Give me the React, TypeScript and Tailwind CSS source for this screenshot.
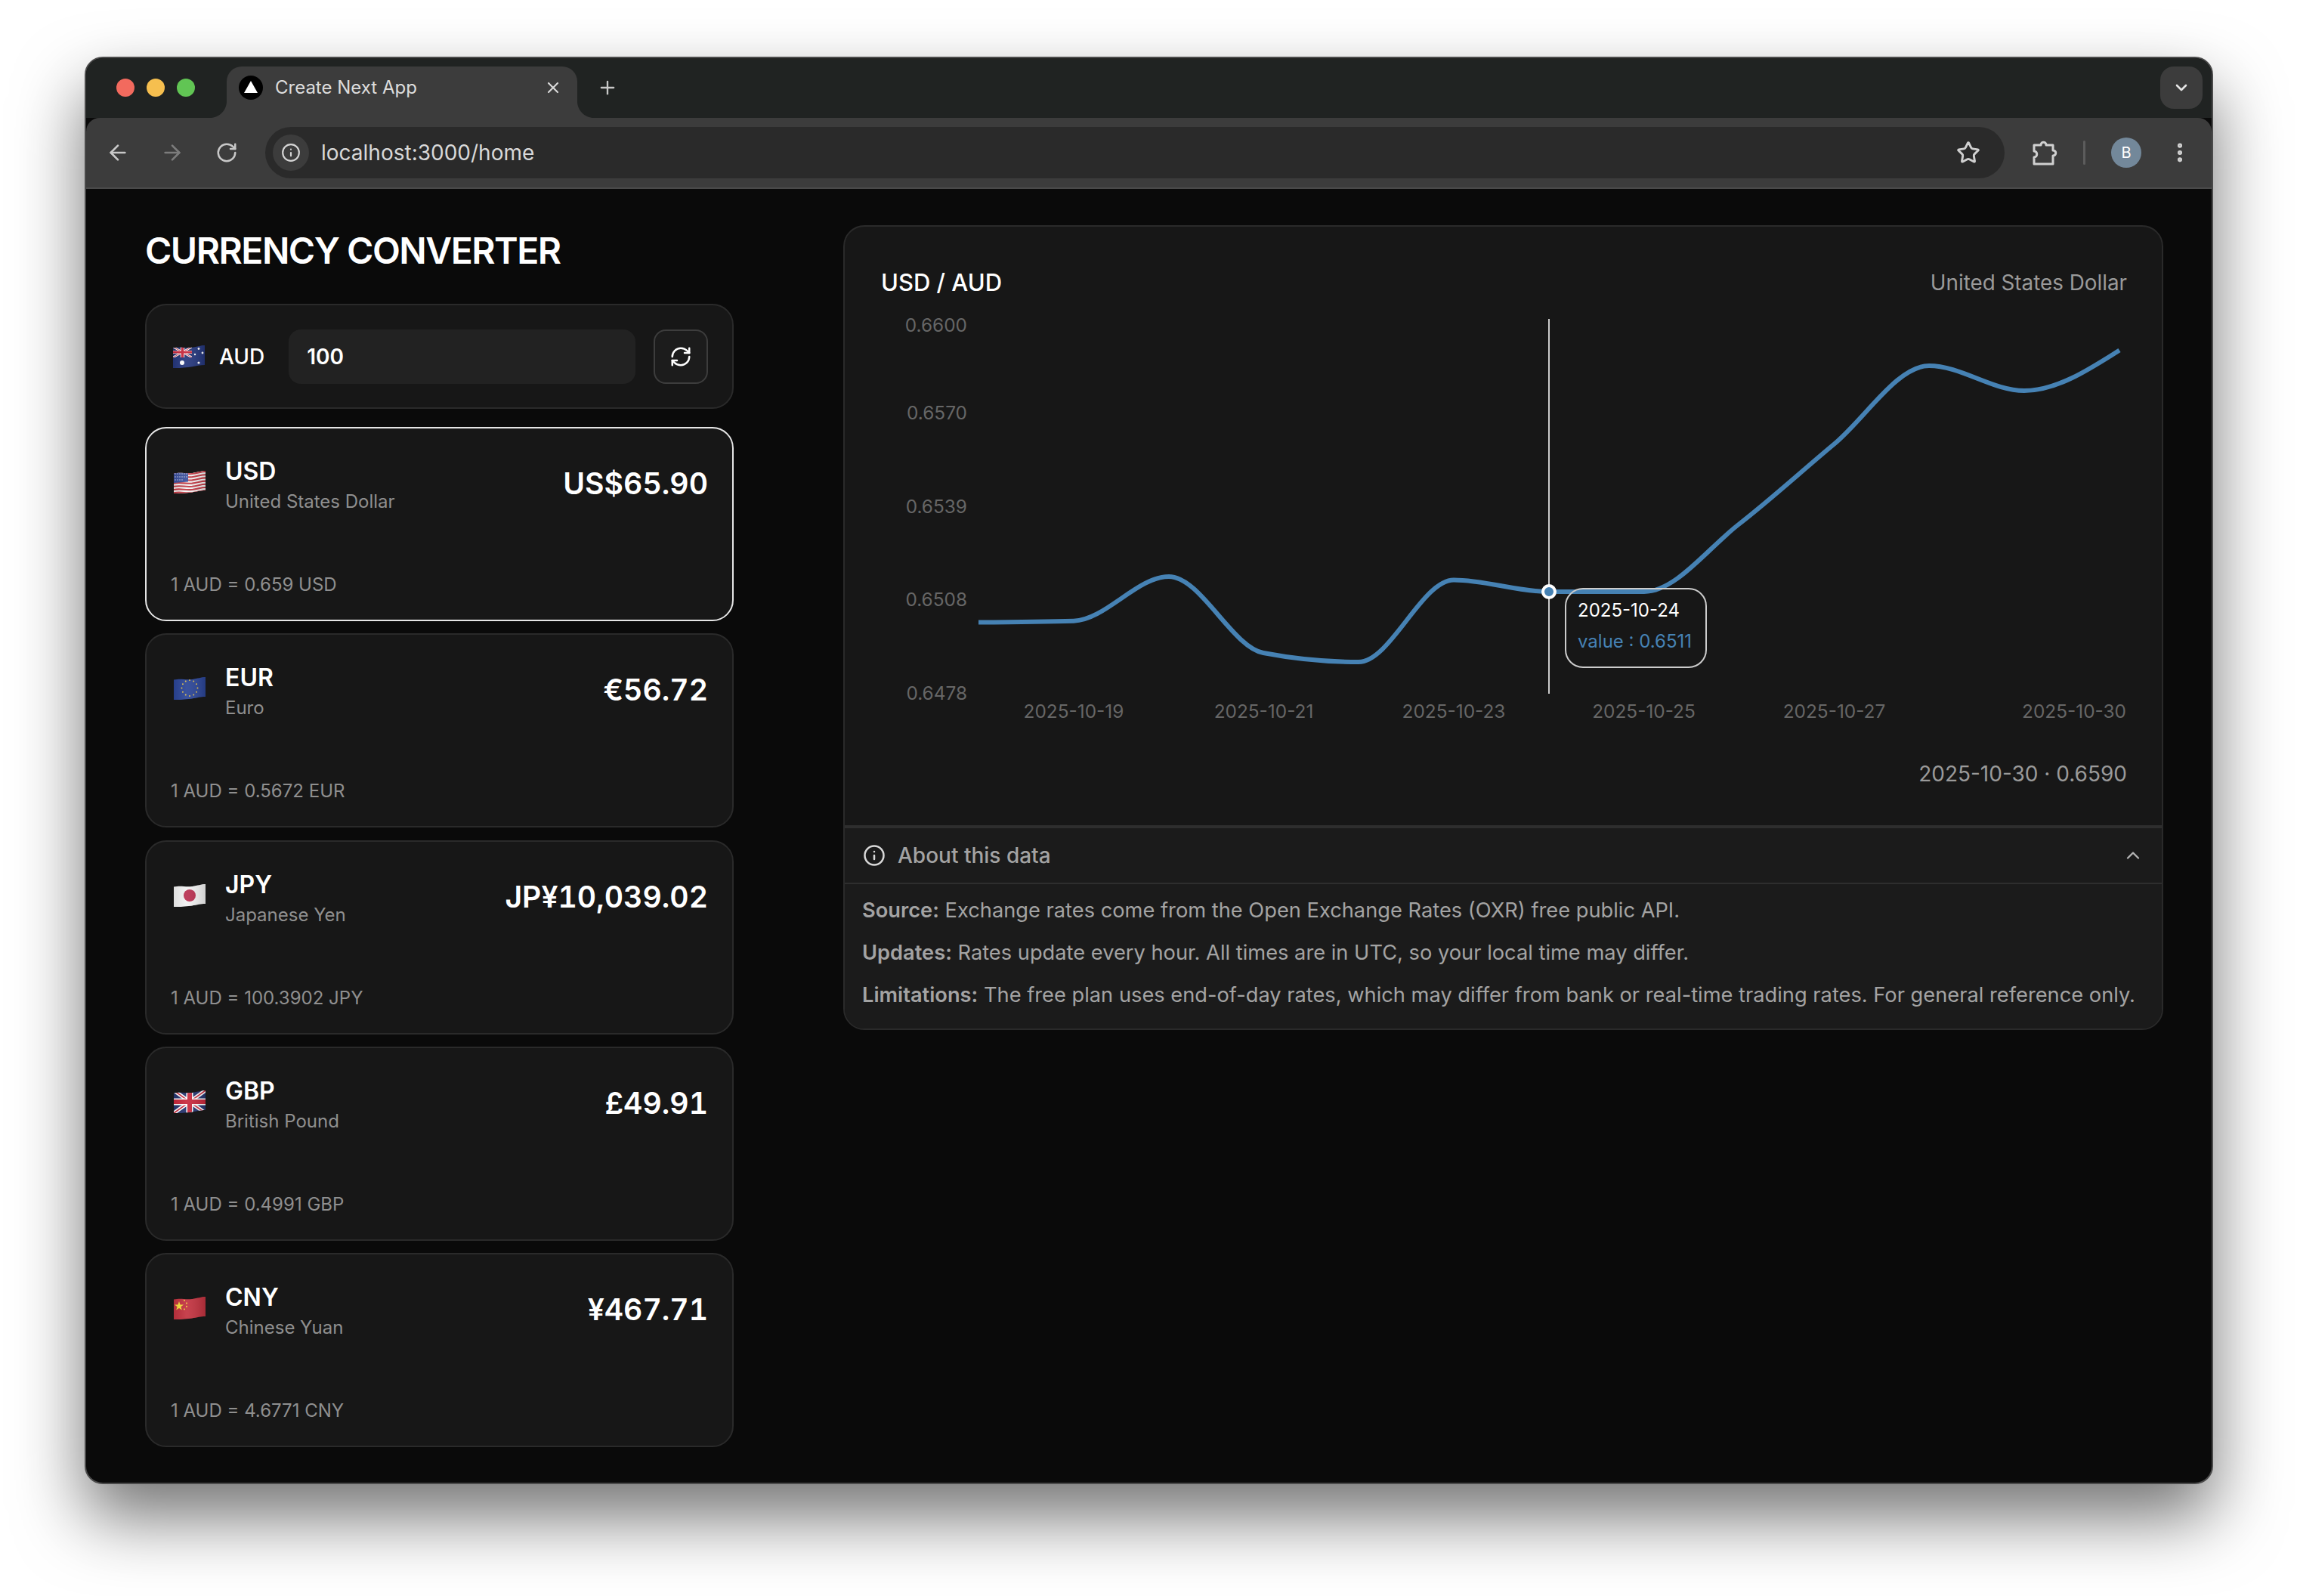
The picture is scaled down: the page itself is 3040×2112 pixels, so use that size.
import React from 'react';
import { ArrowLeft, ArrowRight, ChevronDown, ChevronUp, EllipsisVertical, Info, Plus, RefreshCw, RotateCw, Star, X } from 'lucide-react';

// chart points, in page pixels
const points: [number, number][] = [
  [1295, 823.5], [1421, 821.7], [1547, 763], [1672, 864], [1798, 876], [1924, 767.5], [2050, 783],
  [2176, 783], [2301, 694], [2427, 588], [2553, 484], [2679, 517], [2805, 463.5],
];

const yTicks = [
  { label: '0.6600', y: 430.5 },
  { label: '0.6570', y: 546 },
  { label: '0.6539', y: 670.5 },
  { label: '0.6508', y: 793 },
  { label: '0.6478', y: 917.5 },
];

const xTicks = [
  { label: '2025-10-19', x: 1421 },
  { label: '2025-10-21', x: 1672.5 },
  { label: '2025-10-23', x: 1924 },
  { label: '2025-10-25', x: 2175.5 },
  { label: '2025-10-27', x: 2427.5 },
  { label: '2025-10-30', x: 2745 },
];

const currencies = [
  { code: 'USD', name: 'United States Dollar', amount: 'US$65.90', rate: '1 AUD = 0.659 USD', active: true },
  { code: 'EUR', name: 'Euro', amount: '€56.72', rate: '1 AUD = 0.5672 EUR' },
  { code: 'JPY', name: 'Japanese Yen', amount: 'JP¥10,039.02', rate: '1 AUD = 100.3902 JPY' },
  { code: 'GBP', name: 'British Pound', amount: '£49.91', rate: '1 AUD = 0.4991 GBP' },
  { code: 'CNY', name: 'Chinese Yuan', amount: '¥467.71', rate: '1 AUD = 4.6771 CNY' },
];

// same maths as d3 curveMonotoneX, which is what the chart lib uses
function monotonePath(pts: [number, number][]) {
  const n = pts.length;
  const t: number[] = new Array(n).fill(0);
  for (let i = 1; i < n - 1; i++) {
    const h0 = pts[i][0] - pts[i - 1][0];
    const h1 = pts[i + 1][0] - pts[i][0];
    const s0 = (pts[i][1] - pts[i - 1][1]) / h0;
    const s1 = (pts[i + 1][1] - pts[i][1]) / h1;
    const p = (s0 * h1 + s1 * h0) / (h0 + h1);
    t[i] = (Math.sign(s0) + Math.sign(s1)) * Math.min(Math.abs(s0), Math.abs(s1), 0.5 * Math.abs(p));
  }
  t[0] = (3 * (pts[1][1] - pts[0][1])) / (pts[1][0] - pts[0][0]) / 2 - t[1] / 2;
  t[n - 1] = (3 * (pts[n - 1][1] - pts[n - 2][1])) / (pts[n - 1][0] - pts[n - 2][0]) / 2 - t[n - 2] / 2;
  let d = `M${pts[0][0]} ${pts[0][1]}`;
  for (let i = 1; i < n; i++) {
    const dx = (pts[i][0] - pts[i - 1][0]) / 3;
    d += `C${pts[i - 1][0] + dx} ${pts[i - 1][1] + dx * t[i - 1]} ${pts[i][0] - dx} ${pts[i][1] - dx * t[i]} ${pts[i][0]} ${pts[i][1]}`;
  }
  return d;
}

const UnionJack = () => (
  <g>
    <rect width="42" height="30" fill="#25346f" />
    <path d="M0 0L42 30M42 0L0 30" stroke="#fff" strokeWidth="5" />
    <path d="M0 0L42 30M42 0L0 30" stroke="#c8283c" strokeWidth="1.6" />
    <path d="M21 0V30M0 15H42" stroke="#fff" strokeWidth="9" />
    <path d="M21 0V30M0 15H42" stroke="#c8283c" strokeWidth="6" />
  </g>
);

function FlagArt({ code }: { code: string }) {
  if (code === 'USD') {
    return (
      <g>
        <rect width="42" height="30" fill="#f4f4f4" />
        {Array.from({ length: 7 }).map((_, i) => {
          const y = 4 + i * 4.2;
          return (
            <path key={i} d={`M0 ${y}C10 ${y - 2} 14 ${y + 1} 24 ${y}C32 ${y - 1} 36 ${y - 3} 42 ${y - 3}`} fill="none" stroke="#c23a44" strokeWidth="2.1" />
          );
        })}
        <path d="M0 0H19V14.5L0 16Z" fill="#3a4f9c" />
        {Array.from({ length: 16 }).map((_, i) => (
          <circle key={i} cx={2 + (i % 6) * 3} cy={4 + Math.floor(i / 6) * 4} r="0.7" fill="#dfe4f5" />
        ))}
      </g>
    );
  }
  if (code === 'AUD') {
    return (
      <g>
        <rect width="42" height="30" fill="#24367c" />
        <svg x="0" y="2" width="25" height="14" viewBox="0 0 42 30" preserveAspectRatio="none">
          <UnionJack />
        </svg>
        <circle cx="12" cy="23" r="3" fill="#fff" />
        <circle cx="34" cy="4.5" r="1.4" fill="#fff" />
        <circle cx="29" cy="12" r="1.2" fill="#fff" />
        <circle cx="39" cy="10" r="1.4" fill="#fff" />
        <circle cx="34" cy="23" r="1.6" fill="#fff" />
      </g>
    );
  }
  if (code === 'EUR') {
    return (
      <g>
        <rect width="42" height="30" fill="#2a4496" />
        {Array.from({ length: 12 }).map((_, i) => (
          <circle
            key={i}
            cx={21 + 10.5 * Math.cos((i * Math.PI) / 6)}
            cy={14.5 + 10.5 * Math.sin((i * Math.PI) / 6)}
            r="1"
            fill="#e2c04a"
          />
        ))}
      </g>
    );
  }
  if (code === 'JPY') {
    return (
      <g>
        <rect width="42" height="30" fill="#f2f2f2" />
        <circle cx="21" cy="15" r="8" fill="#b92f50" />
      </g>
    );
  }
  if (code === 'GBP') return <UnionJack />;
  return (
    <g>
      <rect width="42" height="30" fill="#c2323f" />
      <path d="M7 6L8.5 10.5H13L9.4 13.2L10.8 17.6L7 15L3.2 17.6L4.6 13.2L1 10.5H5.5Z" fill="#f6e03d" />
      <circle cx="14" cy="5" r="0.9" fill="#f6e03d" />
      <circle cx="17" cy="8.5" r="0.9" fill="#f6e03d" />
      <circle cx="17" cy="13" r="0.9" fill="#f6e03d" />
      <circle cx="14" cy="16.5" r="0.9" fill="#f6e03d" />
    </g>
  );
}

function Flag({ code }: { code: string }) {
  const id = `wave-${code}`;
  const wave = 'M0 3.5C10 1.5 14 4 24 3C32 2 36 0 42 0V26C34 26 30 28 20 29C12 30 6 30 0 30Z';
  return (
    <svg width="42" height="30" viewBox="0 0 42 30" className="shrink-0">
      <defs>
        <clipPath id={id}>
          <path d={wave} />
        </clipPath>
        <linearGradient id={`${id}-gloss`} x1="0" x2="1" y1="0" y2="0">
          <stop offset="0" stopColor="#000" stopOpacity="0.08" />
          <stop offset="0.4" stopColor="#fff" stopOpacity="0.08" />
          <stop offset="1" stopColor="#000" stopOpacity="0.14" />
        </linearGradient>
      </defs>
      <g clipPath={`url(#${id})`}>
        <FlagArt code={code} />
        <path d={wave} fill={`url(#${id}-gloss)`} />
      </g>
    </svg>
  );
}

function BrowserChrome() {
  return (
    <>
      <div className="relative flex h-[79px] shrink-0 items-end bg-[#202322]">
        <div className="mb-[28px] ml-[40px] flex gap-[16px]">
          <span className="h-[24px] w-[24px] rounded-full bg-[#f26a5e]" />
          <span className="h-[24px] w-[24px] rounded-full bg-[#f6bf4f]" />
          <span className="h-[24px] w-[24px] rounded-full bg-[#61c554]" />
        </div>
        <div className="relative ml-[42px] flex h-[68px] w-[464px] items-center rounded-t-[20px] bg-[#3c3c3c] pb-[12px] pl-[16px] pr-[20px]">
          <svg className="absolute -left-[22px] bottom-0" width="22" height="22" viewBox="0 0 22 22">
            <path d="M22 0V22H0C12 22 22 12 22 0Z" fill="#3c3c3c" />
          </svg>
          <svg className="absolute -right-[22px] bottom-0" width="22" height="22" viewBox="0 0 22 22">
            <path d="M0 0V22H22C10 22 0 12 0 0Z" fill="#3c3c3c" />
          </svg>
          <svg width="32" height="32" viewBox="0 0 32 32" className="shrink-0">
            <circle cx="16" cy="16" r="16" fill="#000" />
            <path d="M16 7L25 23H7Z" fill="#fff" />
          </svg>
          <span className="ml-[16px] flex-1 text-[24px] leading-[32px] text-[#dcdcdc]">Create Next App</span>
          <X size={24} strokeWidth={2.2} className="text-[#d8d8d8]" />
        </div>
        <Plus size={28} strokeWidth={2} className="mb-[26px] ml-[26px] text-[#c8c8c8]" />
        <div className="absolute right-[12px] top-[11px] flex h-[56px] w-[56px] items-center justify-center rounded-[18px] bg-[#3c3c3c]">
          <ChevronDown size={24} strokeWidth={2.6} className="text-[#e4e4e4]" />
        </div>
      </div>
      <div className="flex h-[94px] shrink-0 items-center rounded-t-[18px] border-b-[2px] border-[#4a4a4a] bg-[#3c3c3c] pl-[26px] pr-[26px]">
        <ArrowLeft size={32} strokeWidth={2} className="text-[#c8c8c8]" />
        <ArrowRight size={32} strokeWidth={2} className="ml-[40px] text-[#7c7c7c]" />
        <RotateCw size={30} strokeWidth={2} className="ml-[41px] text-[#c8c8c8]" />
        <div className="ml-[36px] flex h-[68px] min-w-0 flex-1 items-center rounded-full bg-[#2a2a2a] pl-[10px] pr-[32px]">
          <div className="flex h-[48px] w-[48px] items-center justify-center rounded-full bg-[#3c3c3c]">
            <Info size={26} strokeWidth={2} className="text-[#d4d4d4]" />
          </div>
          <span className="ml-[16px] flex-1 text-[28px] leading-[36px] text-[#d8d8d8]">localhost:3000/home</span>
          <Star size={32} strokeWidth={2.2} className="text-[#d0d0d0]" />
        </div>
        <svg width="34" height="34" viewBox="0 0 34 34" fill="none" className="ml-[36px] shrink-0">
          <path
            d="M3 7H12C12 2 19 2 19 7H28V14C33 14 33 21 28 21V32H3V23C8 23 8 15 3 15Z"
            stroke="#d0d0d0"
            strokeWidth="3"
            strokeLinejoin="round"
          />
        </svg>
        <span className="ml-[34px] h-[32px] w-[3px] shrink-0 rounded-full bg-[#5c5c5c]" />
        <span className="ml-[34px] flex h-[40px] w-[40px] shrink-0 items-center justify-center rounded-full bg-[#73889a] text-[20px] text-white">B</span>
        <EllipsisVertical size={32} strokeWidth={2.6} className="ml-[35px] shrink-0 text-[#d0d0d0]" />
      </div>
    </>
  );
}

function Converter() {
  return (
    <div className="w-[779px] shrink-0 pt-[54px]">
      <h1 className="text-[48px] font-semibold leading-[56px] tracking-[-1.5px] text-white">CURRENCY CONVERTER</h1>
      <div className="mt-[42px] flex h-[139px] items-center rounded-[28px] border-[2px] border-[#2a2a2a] bg-[#171717] pl-[35px] pr-[32px]">
        <Flag code="AUD" />
        <span className="ml-[19px] text-[28px] font-medium leading-[36px] text-white">AUD</span>
        <div className="ml-[32px] flex h-[72px] flex-1 items-center rounded-[16px] bg-[#222222] px-[24px] pt-[1px] text-[28px] font-semibold text-white">100</div>
        <div className="ml-[24px] flex h-[72px] w-[72px] items-center justify-center rounded-[16px] border-[2px] border-[#3d3d3d] bg-[#1c1c1c]">
          <RefreshCw size={30} strokeWidth={2} className="text-white" />
        </div>
      </div>
      <div className="mt-[24px] flex flex-col gap-[16.3px]">
        {currencies.map((c) => (
          <div
            key={c.code}
            className={`flex h-[257px] flex-col justify-between rounded-[28px] border-[2px] bg-[#171717] pb-[30px] pl-[32px] pr-[32px] pt-[36px] ${c.active ? 'border-[#e5e5e5]' : 'border-[#2a2a2a]'}`}
          >
            <div className="flex items-center">
              <div className="ml-[4px] shrink-0 self-start pt-[20px]">
                <Flag code={c.code} />
              </div>
              <div className="ml-[26px] flex-1 pt-[1px]">
                <div className="text-[32px] font-semibold leading-[40px] text-white">{c.code}</div>
                <div className="mt-[4px] text-[24px] leading-[32px] text-[#8f8f8f]">{c.name}</div>
              </div>
              <div className="self-start pt-[13px] text-[39.2px] font-semibold leading-[48px] tabular-nums text-white">{c.amount}</div>
            </div>
            <div className="text-[24px] leading-[32px] text-[#8f8f8f]">{c.rate}</div>
          </div>
        ))}
      </div>
    </div>
  );
}

function RateChart() {
  return (
    <div className="relative mt-[16px] h-[550px]">
      <svg width="1743" height="550" viewBox="1118 410 1743 550" className="block">
        {yTicks.map((t) => (
          <text key={t.label} x="1280" y={t.y + 8.5} textAnchor="end" fontSize="24.4" fill="#666666">
            {t.label}
          </text>
        ))}
        {xTicks.map((t, i) => (
          <text key={t.label} x={i === 5 ? 2814 : t.x} y="950" textAnchor={i === 5 ? 'end' : 'middle'} fontSize="24.4" fill="#666666">
            {t.label}
          </text>
        ))}
        <line x1="2050" x2="2050" y1="422" y2="918" stroke="#cccccc" strokeWidth="2" />
        <path d={monotonePath(points)} fill="none" stroke="#4682b4" strokeWidth="6" />
        <circle cx="2050" cy="783" r="8" fill="#4682b4" stroke="#ffffff" strokeWidth="4" />
      </svg>
      <div className="absolute left-[953px] top-[368px] flex h-[106px] w-[188px] flex-col justify-center gap-[9px] rounded-[24px] border-[2px] border-[#cccccc] pb-[6px] pl-[15px]">
        <div className="text-[24px] leading-[32px] text-white">2025-10-24</div>
        <div className="text-[24px] leading-[32px] text-[#4682b4]">value : 0.6511</div>
      </div>
    </div>
  );
}

function ChartCard() {
  return (
    <div className="mt-[48px] flex-1">
      <div className="overflow-hidden rounded-[28px] border-[2px] border-[#2a2a2a] bg-[#171717]">
        <div className="flex items-center justify-between pl-[48px] pr-[46px] pt-[54px]">
          <span className="text-[31px] font-medium leading-[40px] text-white">USD / AUD</span>
          <span className="text-[27.8px] leading-[40px] text-[#9a9a9a]">United States Dollar</span>
        </div>
        <RateChart />
        <div className="mt-[46px] pb-[50px] pl-[48px] pr-[46px] text-right text-[28px] leading-[36px] text-[#9a9a9a]">2025-10-30 · 0.6590</div>
        <div className="border-t-[4px] border-[#2e2e2e] bg-[#1b1b1b]">
          <div className="flex h-[74px] items-center border-b-[2px] border-[#2e2e2e] pl-[24px] pr-[24px]">
            <Info size={30} strokeWidth={2} className="text-[#d8d8d8]" />
            <span className="ml-[16px] flex-1 text-[28px] font-medium leading-[36px] text-[#a3a3a3]">About this data</span>
            <ChevronUp size={28} strokeWidth={2} className="text-[#b4b4b4]" />
          </div>
          <div className="flex flex-col gap-[20px] pb-[26px] pl-[23px] pt-[17px] text-[27.25px] leading-[36px] text-[#a3a3a3]">
            <p><span className="font-semibold">Source:</span> Exchange rates come from the Open Exchange Rates (OXR) free public API.</p>
            <p><span className="font-semibold">Updates:</span> Rates update every hour. All times are in UTC, so your local time may differ.</p>
            <p><span className="font-semibold">Limitations:</span> The free plan uses end-of-day rates, which may differ from bank or real-time trading rates. For general reference only.</p>
          </div>
        </div>
      </div>
    </div>
  );
}

export default function App() {
  return (
    <div className="h-[2112px] w-[3040px] overflow-hidden bg-white pl-[112px] pt-[75px] font-['Inter',sans-serif] antialiased">
      <div className="flex h-[1889px] w-[2817px] flex-col overflow-hidden rounded-[24px] border-[2px] border-[#4a4a4a] bg-[#0a0a0a] shadow-[0_44px_90px_rgba(0,0,0,0.55)]">
        <BrowserChrome />
        <div className="flex flex-1 gap-[145px] pl-[78px] pr-[64px]">
          <Converter />
          <ChartCard />
        </div>
      </div>
    </div>
  );
}
